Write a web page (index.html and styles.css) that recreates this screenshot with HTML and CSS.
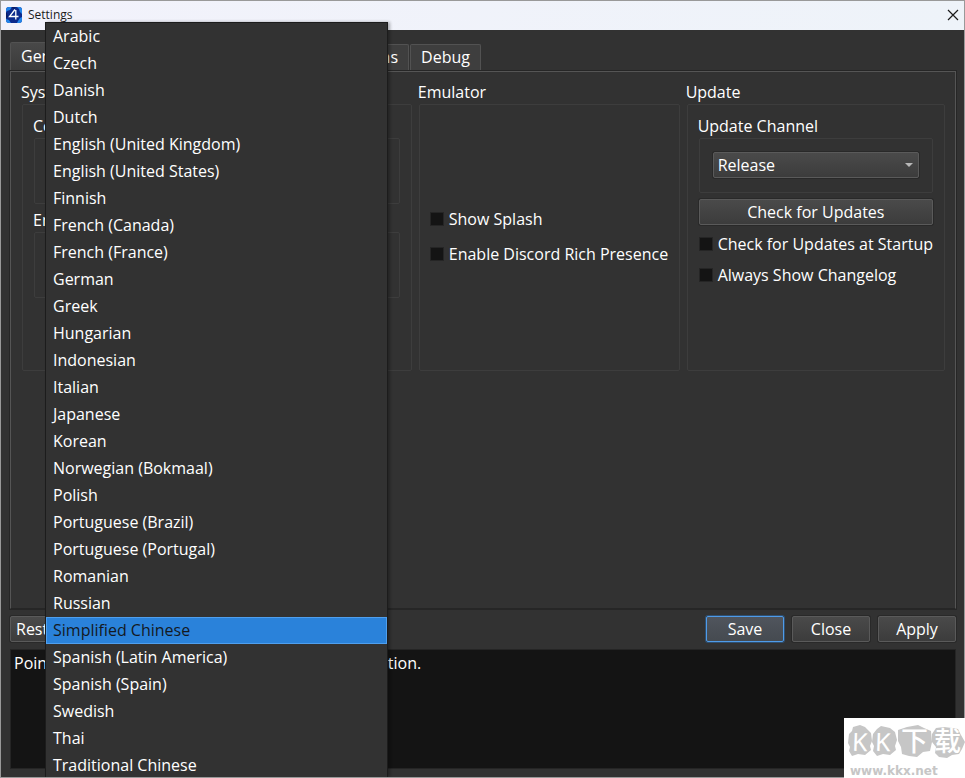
FILE: index.html
```html
<!DOCTYPE html>
<html lang="en">
<head>
<meta charset="utf-8">
<title>Settings</title>
<link rel="stylesheet" href="styles.css">
</head>
<body>
<div class="window">
  <header class="titlebar">
    <svg class="app-icon" viewBox="0 0 16 16" aria-hidden="true">
      <rect width="16" height="16" rx="3" fill="#0c2a8c"/>
      <path d="M0 5V3a3 3 0 0 1 3-3h3L4 3 1 4zM11 0h2a3 3 0 0 1 3 3v4l-2-2-1-3zM0 12l3 1 2 3H3a3 3 0 0 1-3-3zM12 14l2-3 2-1v3a3 3 0 0 1-3 3h-2z" fill="#2385ea"/>
      <path d="M5 0h5l-2 2zM1 6l1 4-2 1V6z" fill="#071a63"/>
      <path d="M9 2.500 3.500 9.500H12.500M9.800 3v9.500" fill="none" stroke="#fff" stroke-width="1.300"/>
    </svg>
    <h1 class="title">Settings</h1>
    <button class="close" type="button" aria-label="Close window">
      <svg viewBox="0 0 12 12"><path d="M1 1l10 10M11 1L1 11" stroke="#1b1b1b" stroke-width="1.200" fill="none"/></svg>
    </button>
  </header>

  <main class="content">
    <div class="tabs" role="tablist">
      <button class="tab selected" type="button" role="tab" aria-selected="true">General</button>
      <button class="tab" type="button" role="tab">GUI</button>
      <button class="tab" type="button" role="tab">Graphics</button>
      <button class="tab" type="button" role="tab">User</button>
      <button class="tab" type="button" role="tab">GPU</button>
      <button class="tab" type="button" role="tab">Paths</button>
      <button class="tab" type="button" role="tab">Debug</button>
    </div>

    <section class="panel" role="tabpanel">
      <div class="columns">
        <section class="group">
          <h2 class="group-title">System</h2>
          <div class="box">
            <h3 class="group-title">Console Language</h3>
            <div class="box inner tall"></div>
            <h3 class="group-title spaced">Emulator Language</h3>
            <div class="box inner tall"></div>
          </div>
        </section>
        <section class="group">
          <h2 class="group-title">Emulator</h2>
          <div class="box centered">
            <label class="check"><input type="checkbox">Show Splash</label>
            <label class="check"><input type="checkbox">Enable Discord Rich Presence</label>
          </div>
        </section>
        <section class="group">
          <h2 class="group-title">Update</h2>
          <div class="box">
            <label class="group-title" for="channel">Update Channel</label>
            <div class="box inner">
              <div class="select-wrap">
                <select id="channel" class="control select"><option>Release</option></select>
                <svg class="arrow" viewBox="0 0 8 4" aria-hidden="true"><path d="M0 0h8L4 4z" fill="#b8b8b8"/></svg>
              </div>
            </div>
            <button class="control update-button" type="button">Check for Updates</button>
            <div class="update-checks">
              <label class="check"><input type="checkbox">Check for Updates at Startup</label>
              <label class="check"><input type="checkbox">Always Show Changelog</label>
            </div>
          </div>
        </section>
      </div>
    </section>

    <div class="actions">
      <button class="control restore" type="button">Restore Defaults</button>
      <button class="control action primary" type="button">Save</button>
      <button class="control action" type="button">Close</button>
      <button class="control action" type="button">Apply</button>
    </div>

    <p class="description">Point your mouse at an option to display a description.</p>
  </main>

  <ul class="popup" role="listbox" aria-label="Emulator Language">
    <li role="option">Arabic</li>
    <li role="option">Czech</li>
    <li role="option">Danish</li>
    <li role="option">Dutch</li>
    <li role="option">English (United Kingdom)</li>
    <li role="option">English (United States)</li>
    <li role="option">Finnish</li>
    <li role="option">French (Canada)</li>
    <li role="option">French (France)</li>
    <li role="option">German</li>
    <li role="option">Greek</li>
    <li role="option">Hungarian</li>
    <li role="option">Indonesian</li>
    <li role="option">Italian</li>
    <li role="option">Japanese</li>
    <li role="option">Korean</li>
    <li role="option">Norwegian (Bokmaal)</li>
    <li role="option">Polish</li>
    <li role="option">Portuguese (Brazil)</li>
    <li role="option">Portuguese (Portugal)</li>
    <li role="option">Romanian</li>
    <li role="option">Russian</li>
    <li role="option" class="current" aria-selected="true">Simplified Chinese</li>
    <li role="option">Spanish (Latin America)</li>
    <li role="option">Spanish (Spain)</li>
    <li role="option">Swedish</li>
    <li role="option">Thai</li>
    <li role="option">Traditional Chinese</li>
  </ul>
</div>

<aside class="badge">
  <svg viewBox="0 0 121 60" role="img" aria-label="KK下载 www.kkx.net">
    <g fill="#c6c6c6">
      <path d="M5 16l3-3 1-4 7-2 5 2 6 6 1 8-2 5 1 4-6 5-7-1-6 2-3-5 1-4-2-4z"/>
      <path d="M29 16l4-5 4-3 9 2 5 4 2 8-2 6 1 4-6 5-7-1-6 2-4-5 1-5-2-4z"/>
      <path d="M54 12l9-3 11-2 6 3 7 3 1 11-2 9-7 1-6 5-8-1-7-2-1-7-3-6z"/>
      <path d="M88 16l4-6 8-1 8 1 6 1 3 6 4 7-3 7-3 5-7 1-5 3-8-1-4-4 1-6-4-5z"/>
    </g>
    <g class="badge-name">
      <text x="8" y="33" transform="rotate(2 16 24)">K</text>
      <text x="31" y="33" transform="rotate(2 39 24)">K</text>
      <text class="han" x="57" y="33">下</text>
      <text class="han" x="90" y="33">载</text>
    </g>
    <text class="badge-url" x="6" y="57">www.kkx.net</text>
  </svg>
</aside>
</body>
</html>
```
FILE: styles.css
```css
* {
  box-sizing: border-box;
}

body {
  margin: 0;
  background: #323232;
  color: #fff;
  font: 16px/20px "Open Sans", "Noto Sans CJK SC", sans-serif;
}

h1, h2, h3, p, ul {
  margin: 0;
  padding: 0;
  font-size: inherit;
  font-weight: normal;
}

button, select {
  margin: 0;
  color: inherit;
  font: inherit;
}

.window {
  position: relative;
  display: flex;
  flex-direction: column;
  height: 100vh;
  border: 1px solid #999;
  overflow: hidden;
}

.titlebar {
  display: flex;
  align-items: center;
  flex: none;
  height: 29px;
  padding: 0 5px 2px;
  gap: 6px;
  background: linear-gradient(90deg, #f2f2fb, #eef3f9);
  color: #1b1b1b;
}

.app-icon {
  width: 16px;
  height: 16px;
}

.title {
  flex: 1;
  font-size: 12px;
}

.close {
  display: flex;
  padding: 0;
  border: 0;
  background: none;
}

.close svg {
  width: 12px;
  height: 12px;
}

.content {
  display: flex;
  flex-direction: column;
  flex: 1;
  min-height: 0;
  padding: 12px 8px 8px 9px;
}

.tabs {
  display: flex;
  align-items: flex-end;
  gap: 1px;
  height: 29px;
}

.tab {
  height: 27px;
  padding: 0 10px 2px;
  border: 1px solid #525252;
  border-bottom: 0;
  border-radius: 2px 2px 0 0;
  background: #3e3e3e;
}

.tab.selected {
  height: 29px;
  background: linear-gradient(#484848, #3a3a3a);
}

.panel {
  flex: 1;
  padding: 10px 10px 10px 11px;
  border: 1px solid #555;
  border-bottom-color: #262626;
  box-shadow: 0 0 0 1px #262626;
}

.columns {
  display: grid;
  grid-template-columns: 390fr 261fr 258fr;
  gap: 7px;
  height: 289px;
}

.group {
  display: flex;
  flex-direction: column;
}

.group-title {
  display: block;
  height: 22px;
  margin-left: -1px;
}

.box {
  flex: 1;
  padding: 11px;
  border: 1px solid #3d3d3d;
  border-radius: 2px;
}

.box.inner {
  height: 55px;
  padding: 13px;
}

.box.inner.tall {
  height: 66px;
}

.spaced {
  margin-top: 6px;
}

.centered {
  display: flex;
  flex-direction: column;
  justify-content: center;
  gap: 15px;
  padding: 11px 10px 13px;
}

.check {
  display: flex;
  align-items: center;
  gap: 5px;
  white-space: nowrap;
}

.check input {
  width: 14px;
  height: 14px;
  margin: 0;
  appearance: none;
  border: 1px solid #252525;
  background: #141414;
}

.control {
  height: 26px;
  padding: 0 5px;
  border: 1px solid #5a5a5a;
  border-radius: 2px;
  background: linear-gradient(#4a4a4a, #3c3c3c);
  box-shadow: 0 0 0 1px #292929;
}

.select-wrap {
  display: grid;
  align-items: center;
}

.select {
  grid-area: 1 / 1;
  padding: 0 4px;
  appearance: none;
}

.arrow {
  grid-area: 1 / 1;
  justify-self: end;
  width: 8px;
  height: 4px;
  margin-right: 6px;
  pointer-events: none;
}

.update-button {
  width: 100%;
  margin-top: 6px;
}

.update-checks {
  display: grid;
  gap: 11px;
  margin-top: 9px;
}

.actions {
  display: flex;
  gap: 8px;
  margin-top: 7px;
}

.restore {
  margin-right: auto;
}

.action {
  width: 78px;
}

.action.primary {
  border-color: #4f9be8;
  background: linear-gradient(#50555d, #454a50);
  box-shadow: 0 0 0 1px #2f4f70;
}

.description {
  height: 120px;
  margin-top: 7px;
  padding: 3px;
  border: 1px solid #252525;
  background: #141414;
}

.popup {
  position: absolute;
  top: 21px;
  bottom: 0;
  left: 44px;
  width: 343px;
  border: 1px solid #1c1c1c;
  border-bottom: 0;
  background: #323232;
  box-shadow: 2px 0 3px rgba(0, 0, 0, 0.3);
  list-style: none;
  overflow: hidden;
}

.popup li {
  height: 27px;
  padding: 0 6px;
  border: 1px solid transparent;
  line-height: 25px;
}

.popup .current {
  border-color: #4f9fee;
  background: #2a82da;
  color: #14191f;
}

.badge {
  position: fixed;
  right: 0;
  bottom: 0;
  width: 121px;
  height: 60px;
  background: #fff;
}

.badge svg {
  display: block;
}

.badge-name {
  fill: #fff;
  font: 25px "Noto Sans", sans-serif;
}

.badge-name .han {
  font: 500 27px "Noto Sans CJK SC", sans-serif;
}

.badge-url {
  fill: #c6c6c6;
  font: bold 12px "DejaVu Sans", sans-serif;
}
```
